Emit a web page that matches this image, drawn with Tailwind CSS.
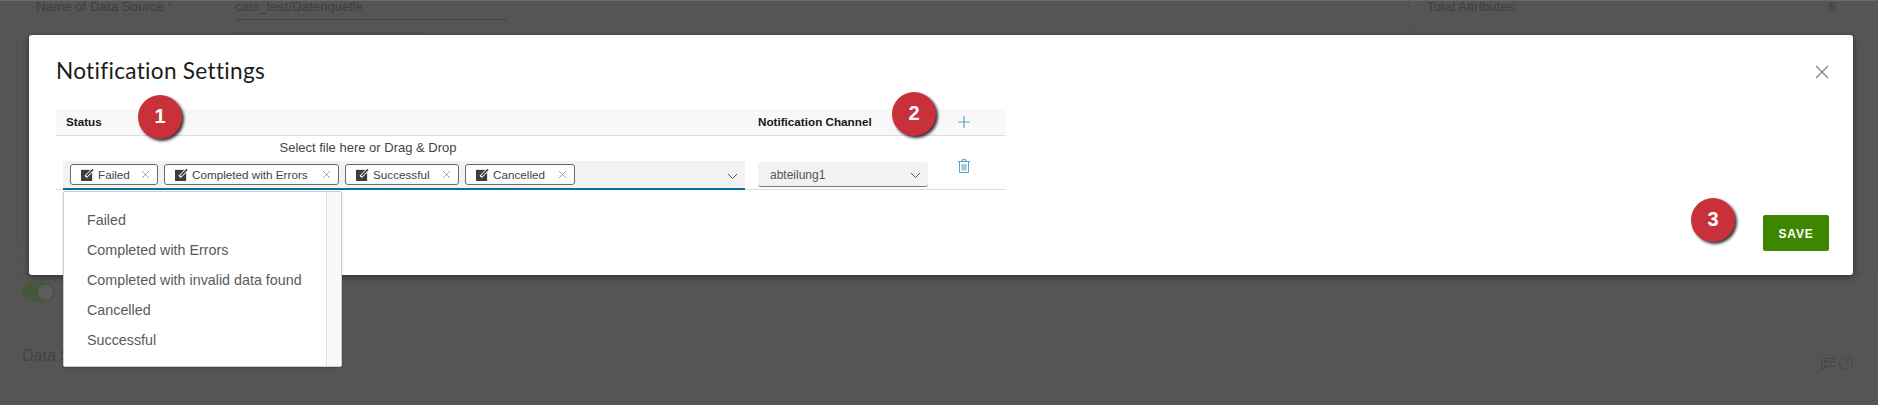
<!DOCTYPE html>
<html lang="en">
<head>
  <meta charset="UTF-8">
  <title>Notification Settings</title>
  <script src="https://cdn.jsdelivr.net/npm/@tailwindcss/browser@4"></script>
</head>
<body class="bg-[#555555] h-[405px] overflow-hidden relative font-['Liberation_Sans',sans-serif]">

  <!-- Dimmed page behind the modal -->
  <div class="h-[405px] flex flex-col border-t border-[#6a6a6a] text-[#3f3f3f] text-[13.3px]">
    <div class="h-[256px] shrink-0 border-b border-[#515151]">
      <div class="h-[242px] ml-[16px] mr-[12px] border-x border-b border-[#515151] flex pl-[19px] pr-[29px]">
        <div class="w-[500px] flex items-start -mt-[4px]">
          <span class="w-[199px]">Name of Data Source <span class="text-[#5c3a3a]">*</span></span>
          <div class="w-[272px]">
            <div class="h-[23px] border-b border-[#444444]">cats_test/Datenquelle</div>
            <div class="w-[190px] h-[12px] mt-[12px] bg-[#515151] rounded-t-[3px]"></div>
          </div>
        </div>
        <div class="flex-1"></div>
        <div class="w-[428px] flex justify-between items-start -mt-[4px] pl-[18px] h-[35px] border-l border-[#515151]">
          <span>Total Attributes:</span>
          <span>6</span>
        </div>
      </div>
    </div>
    <div class="flex-1 mt-[16px] ml-[6px] mr-[3px] border-x border-t border-[#515151] pl-[15px] pr-[21px] pt-[9px]">
      <div class="w-[33px] h-[18px] rounded-full bg-[#44583a] flex justify-end items-center pr-[2px]">
        <span class="w-[15px] h-[15px] rounded-full bg-[#5c5c5c]"></span>
      </div>
      <div class="flex justify-between items-start mt-[43px]">
        <span class="text-[16px] leading-[24px] text-[#444444]">Data Source</span>
        <div class="flex items-center gap-[4px] mt-[12px]">
          <svg class="w-[14px] h-[12px]" viewBox="0 0 14 12" fill="none" stroke="#3c4650" stroke-width="1">
            <path d="M.5 0v11.500h3M.5 5.500h3M3.500 3.500h2v2h-2zM3.500 8.500h2v2h-2zM5 1.500h9M7 5h7M7 9.500h7"/>
          </svg>
          <svg class="w-[14px] h-[14px]" viewBox="0 0 14 14" fill="none" stroke="#3c4650" stroke-width="1">
            <circle cx="7" cy="7" r="6.500"/>
            <path d="M5 5.500a2 2 0 1 1 3 1.700c-.7.4-1 .8-1 1.600M7 10v1"/>
          </svg>
        </div>
      </div>
    </div>
  </div>

  <!-- Modal -->
  <div class="absolute left-[29px] top-[35px] w-[1824px] h-[240px] bg-white rounded-[3px] shadow-[0_2px_6px_rgba(0,0,0,0.45)] pl-[27px] pr-[24px]">
    <div class="h-[74px] flex items-center justify-between">
      <h2 class="text-[22.6px] text-[#1a1a1a] font-['Lato',sans-serif] tracking-[0.3px] mt-[-2px]">Notification Settings</h2>
      <button>
        <svg class="w-[14px] h-[14px] block" viewBox="0 0 14 14" fill="none" stroke="#7d7d7d" stroke-width="1.100">
          <path d="M1 1l12 12M13 1L1 13"/>
        </svg>
      </button>
    </div>

    <div class="w-[950px]">
      <!-- Table header -->
      <div class="h-[27px] bg-[#f8f8f8] border-b border-[#dddddd] flex items-center text-[11.7px] font-bold text-[#1a1a1a]">
        <span class="w-[702px] pl-[10px]">Status</span>
        <span class="w-[200px]">Notification Channel</span>
        <svg class="w-[12px] h-[12px]" viewBox="0 0 12 12" fill="none" stroke="#5ba3c9" stroke-width="1.200">
          <path d="M6 0v12M0 6h12"/>
        </svg>
      </div>
      <!-- Row -->
      <div class="h-[54px] border-b border-[#dddddd] flex relative">
        <div class="w-[702px] pl-[7px] pr-[13px]">
          <div class="h-[25px] pb-[1px] flex items-center justify-center text-[13px] text-[#444444] pr-[72px]">Select file here or Drag &amp; Drop</div>
          <div class="h-[29px] bg-[#f2f2f2] rounded-t-[3px] border-b-[2px] border-[#0a6ea6] flex items-center pl-[7px] gap-[6px] relative">
            <span class="w-[88px] h-[21px] bg-white border border-[#6b6b6b] rounded-[3px] flex items-center pl-[10px] text-[11.7px] text-[#444444] gap-[4px]">
              <svg class="w-[13px] h-[13px] shrink-0" viewBox="0 0 14 14"><rect y="2" width="12" height="12" fill="#3d3d3d"/><path d="M5 9.500l7-7" stroke="#fff" stroke-width="3.500"/><path d="M6 8.500l7-7" stroke="#3d3d3d" stroke-width="1.600"/></svg>
              <span class="flex-1">Failed</span>
              <svg class="w-[7px] h-[7px] mr-[8px]" viewBox="0 0 7 7" fill="none" stroke="#8a8a8a" stroke-width=".8"><path d="M0 0l7 7M7 0L0 7"/></svg>
            </span>
            <span class="w-[175px] h-[21px] bg-white border border-[#6b6b6b] rounded-[3px] flex items-center pl-[10px] text-[11.7px] text-[#444444] gap-[4px]">
              <svg class="w-[13px] h-[13px] shrink-0" viewBox="0 0 14 14"><rect y="2" width="12" height="12" fill="#3d3d3d"/><path d="M5 9.500l7-7" stroke="#fff" stroke-width="3.500"/><path d="M6 8.500l7-7" stroke="#3d3d3d" stroke-width="1.600"/></svg>
              <span class="flex-1">Completed with Errors</span>
              <svg class="w-[7px] h-[7px] mr-[8px]" viewBox="0 0 7 7" fill="none" stroke="#8a8a8a" stroke-width=".8"><path d="M0 0l7 7M7 0L0 7"/></svg>
            </span>
            <span class="w-[114px] h-[21px] bg-white border border-[#6b6b6b] rounded-[3px] flex items-center pl-[10px] text-[11.7px] text-[#444444] gap-[4px]">
              <svg class="w-[13px] h-[13px] shrink-0" viewBox="0 0 14 14"><rect y="2" width="12" height="12" fill="#3d3d3d"/><path d="M5 9.500l7-7" stroke="#fff" stroke-width="3.500"/><path d="M6 8.500l7-7" stroke="#3d3d3d" stroke-width="1.600"/></svg>
              <span class="flex-1">Successful</span>
              <svg class="w-[7px] h-[7px] mr-[8px]" viewBox="0 0 7 7" fill="none" stroke="#8a8a8a" stroke-width=".8"><path d="M0 0l7 7M7 0L0 7"/></svg>
            </span>
            <span class="w-[110px] h-[21px] bg-white border border-[#6b6b6b] rounded-[3px] flex items-center pl-[10px] text-[11.7px] text-[#444444] gap-[4px]">
              <svg class="w-[13px] h-[13px] shrink-0" viewBox="0 0 14 14"><rect y="2" width="12" height="12" fill="#3d3d3d"/><path d="M5 9.500l7-7" stroke="#fff" stroke-width="3.500"/><path d="M6 8.500l7-7" stroke="#3d3d3d" stroke-width="1.600"/></svg>
              <span class="flex-1">Cancelled</span>
              <svg class="w-[7px] h-[7px] mr-[8px]" viewBox="0 0 7 7" fill="none" stroke="#8a8a8a" stroke-width=".8"><path d="M0 0l7 7M7 0L0 7"/></svg>
            </span>
            <svg class="absolute right-[8px] top-[13px] w-[9px] h-[5px]" viewBox="0 0 9 5" fill="none" stroke="#555555" stroke-width="1"><path d="M0 0l4.500 4.500L9 0"/></svg>

            <!-- Open dropdown -->
            <div class="absolute left-0 top-[30px] w-[279px] h-[176px] bg-white border border-[#cccccc] rounded-[2px] shadow-[0_1px_2px_rgba(0,0,0,0.2)] flex z-10">
              <ul class="flex-1 pt-[13px] pl-[23px] text-[14.3px] text-[#5a5a5a]">
                <li class="h-[30px] leading-[30px]">Failed</li>
                <li class="h-[30px] leading-[30px]">Completed with Errors</li>
                <li class="h-[30px] leading-[30px]">Completed with invalid data found</li>
                <li class="h-[30px] leading-[30px]">Cancelled</li>
                <li class="h-[30px] leading-[30px]">Successful</li>
              </ul>
              <div class="w-[15px] bg-[#f9f9f9] border-l border-[#e2e2e2]"></div>
            </div>
          </div>
        </div>
        <div class="w-[170px] pt-[26px]">
          <div class="h-[25px] bg-[#f2f2f2] rounded-[3px] border-b border-[#6f7a80] flex items-center justify-between pl-[12px] pr-[8px] text-[12px] text-[#555555]">
            <span class="pt-[1px]">abteilung1</span>
            <svg class="w-[9px] h-[5px] mt-[3px]" viewBox="0 0 9 5" fill="none" stroke="#555555" stroke-width="1"><path d="M0 0l4.500 4.500L9 0"/></svg>
          </div>
        </div>
        <div class="pl-[30px] pt-[23px]">
          <svg class="w-[12px] h-[14px] block" viewBox="0 0 12 14" fill="none" stroke="#5ba3c9" stroke-width="1">
            <path d="M0 2.500h12M4 2.500V.7h4v1.800M1.500 2.500v11h9v-11M4.200 5v6.500M6 5v6.500M7.800 5v6.500"/>
          </svg>
        </div>
      </div>
    </div>

    <!-- Save -->
    <div class="absolute right-[24px] top-[180px]">
      <button class="w-[66px] h-[36px] pt-[1px] bg-[#3f8600] rounded-[2px] text-white text-[12px] font-bold tracking-[0.8px]">SAVE</button>
    </div>
  </div>

  <!-- Numbered callouts -->
  <div class="absolute left-[138px] top-[95px] w-[44px] h-[44px] rounded-full bg-[#c8303a] shadow-[2px_2px_3px_rgba(0,0,0,0.8)] flex items-center justify-center text-white font-bold text-[20px] pb-[2px]">1</div>
  <div class="absolute left-[892px] top-[92px] w-[44px] h-[44px] rounded-full bg-[#c8303a] shadow-[2px_2px_3px_rgba(0,0,0,0.8)] flex items-center justify-center text-white font-bold text-[20px] pb-[2px]">2</div>
  <div class="absolute left-[1691px] top-[198px] w-[44px] h-[44px] rounded-full bg-[#c8303a] shadow-[2px_2px_3px_rgba(0,0,0,0.8)] flex items-center justify-center text-white font-bold text-[20px] pb-[2px]">3</div>

</body>
</html>
